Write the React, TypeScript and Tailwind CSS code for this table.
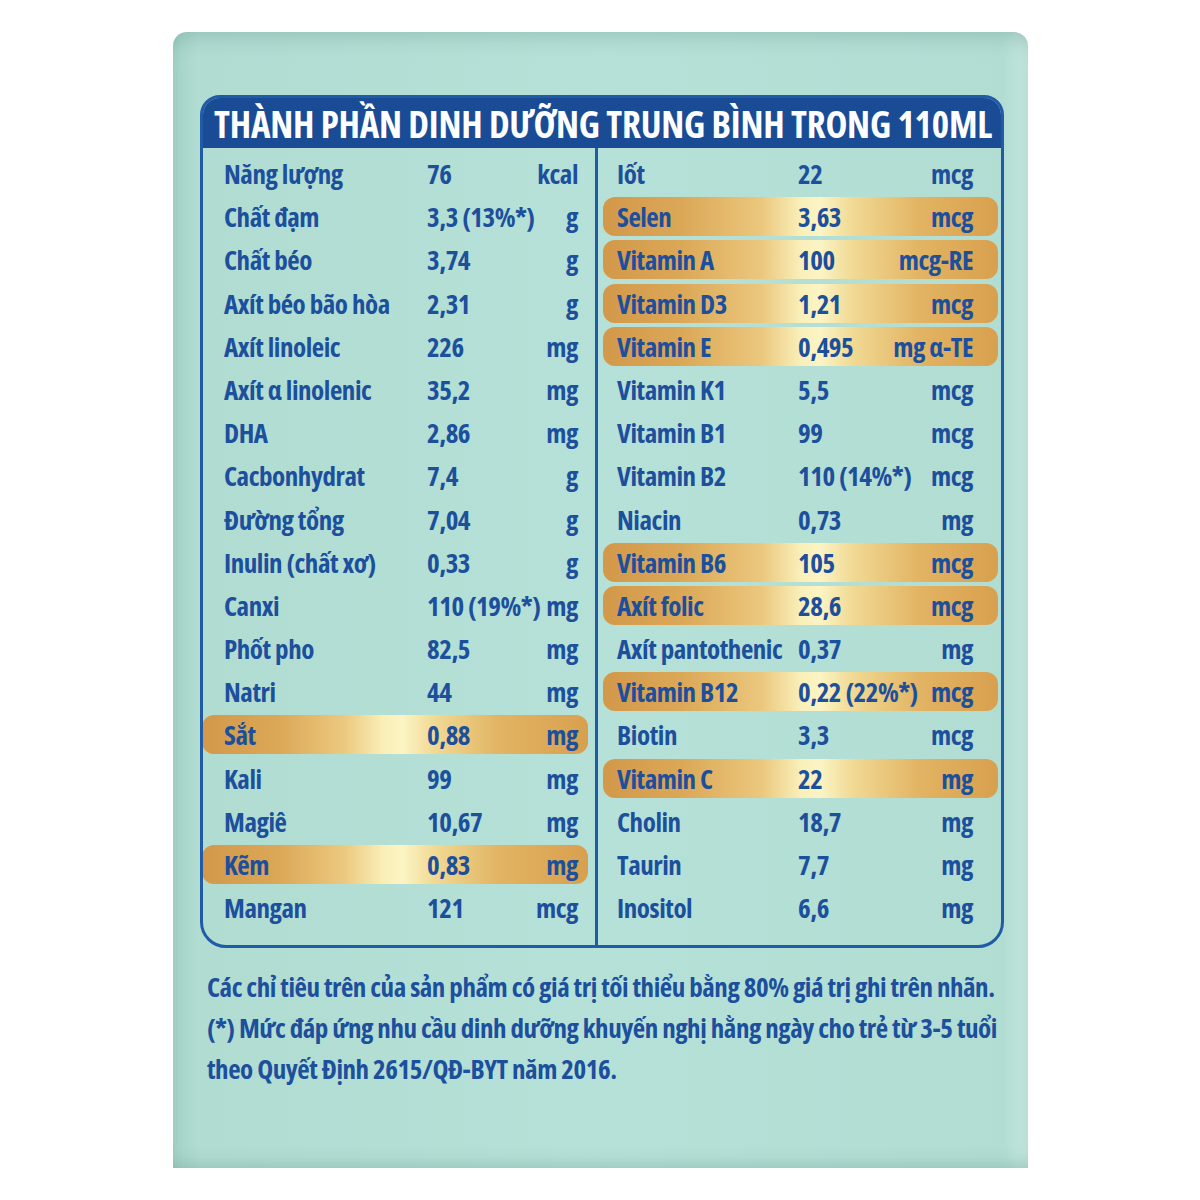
import React from 'react'

type Row = { name: string; value: string; unit: string; gold?: boolean }

const LEFT: Row[] = [
  { name: 'Năng lượng', value: '76', unit: 'kcal' },
  { name: 'Chất đạm', value: '3,3 (13%*)', unit: 'g' },
  { name: 'Chất béo', value: '3,74', unit: 'g' },
  { name: 'Axít béo bão hòa', value: '2,31', unit: 'g' },
  { name: 'Axít linoleic', value: '226', unit: 'mg' },
  { name: 'Axít α linolenic', value: '35,2', unit: 'mg' },
  { name: 'DHA', value: '2,86', unit: 'mg' },
  { name: 'Cacbonhydrat', value: '7,4', unit: 'g' },
  { name: 'Đường tổng', value: '7,04', unit: 'g' },
  { name: 'Inulin (chất xơ)', value: '0,33', unit: 'g' },
  { name: 'Canxi', value: '110 (19%*)', unit: 'mg' },
  { name: 'Phốt pho', value: '82,5', unit: 'mg' },
  { name: 'Natri', value: '44', unit: 'mg' },
  { name: 'Sắt', value: '0,88', unit: 'mg', gold: true },
  { name: 'Kali', value: '99', unit: 'mg' },
  { name: 'Magiê', value: '10,67', unit: 'mg' },
  { name: 'Kẽm', value: '0,83', unit: 'mg', gold: true },
  { name: 'Mangan', value: '121', unit: 'mcg' },
]

const RIGHT: Row[] = [
  { name: 'Iốt', value: '22', unit: 'mcg' },
  { name: 'Selen', value: '3,63', unit: 'mcg', gold: true },
  { name: 'Vitamin A', value: '100', unit: 'mcg-RE', gold: true },
  { name: 'Vitamin D3', value: '1,21', unit: 'mcg', gold: true },
  { name: 'Vitamin E', value: '0,495', unit: 'mg α-TE', gold: true },
  { name: 'Vitamin K1', value: '5,5', unit: 'mcg' },
  { name: 'Vitamin B1', value: '99', unit: 'mcg' },
  { name: 'Vitamin B2', value: '110 (14%*)', unit: 'mcg' },
  { name: 'Niacin', value: '0,73', unit: 'mg' },
  { name: 'Vitamin B6', value: '105', unit: 'mcg', gold: true },
  { name: 'Axít folic', value: '28,6', unit: 'mcg', gold: true },
  { name: 'Axít pantothenic', value: '0,37', unit: 'mg' },
  { name: 'Vitamin B12', value: '0,22 (22%*)', unit: 'mcg', gold: true },
  { name: 'Biotin', value: '3,3', unit: 'mcg' },
  { name: 'Vitamin C', value: '22', unit: 'mg', gold: true },
  { name: 'Cholin', value: '18,7', unit: 'mg' },
  { name: 'Taurin', value: '7,7', unit: 'mg' },
  { name: 'Inositol', value: '6,6', unit: 'mg' },
]

const GOLD_L = 'bg-[linear-gradient(to_right,#d3984a_0%,#dba857_20%,#ecc97f_37%,#f9efb8_47%,#fbf4c4_52%,#f1da95_60%,#e2b463_77%,#d8a04e_100%)]'
const GOLD_R = 'bg-[linear-gradient(to_right,#d3984a_0%,#dba857_20%,#ebc77d_40%,#f9efb8_50%,#fbf4c4_55%,#f1da95_63%,#e2b463_80%,#d8a04e_100%)]'

function LeftRow({ r }: { r: Row }) {
  return (
    <div
      className={`ml-[-1px] mr-[7px] grid h-[39px] grid-cols-[203px_1fr_auto] items-center rounded-[12px] pl-[22px] pr-[10px] ${r.gold ? GOLD_L : ''}`}>
      <span className="whitespace-nowrap">{r.name}</span>
      <span className="whitespace-nowrap">{r.value}</span>
      <span className="whitespace-nowrap text-right">{r.unit}</span>
    </div>
  )
}

function RightRow({ r }: { r: Row }) {
  return (
    <div
      className={`ml-[5px] mr-[3px] grid h-[39px] grid-cols-[181px_1fr_auto] items-center rounded-[12px] pl-[14px] pr-[25px] ${r.gold ? GOLD_R : ''}`}>
      <span className="whitespace-nowrap">{r.name}</span>
      <span className="whitespace-nowrap">{r.value}</span>
      <span className="whitespace-nowrap text-right">{r.unit}</span>
    </div>
  )
}

export default function App() {
  return (
    <div className="min-h-[1200px] w-[1200px] bg-white pt-[32px] font-['Open_Sans',sans-serif] [font-stretch:75%]">
      <div className="ml-[173px] h-[1136px] w-[855px] rounded-t-[14px] bg-[linear-gradient(to_right,#a4d3c8_0%,#b1dcd2_3%,#b6e1d8_50%,#b2ddd3_97%,#c3e6de_100%)] pt-[63px] pl-[27px] shadow-[inset_0_16px_20px_-12px_rgba(70,120,110,0.28),inset_0_-14px_18px_-12px_rgba(70,120,110,0.3)]">
        <div className="w-[804px] overflow-hidden rounded-t-[20px] rounded-b-[26px] border-[3px] border-[#1f5ba7]">
          <div className="flex h-[50px] items-center whitespace-nowrap bg-[#1a4c96] pl-[11px] text-[37px] font-bold leading-none tracking-[-0.2px] text-white">
            THÀNH PHẦN DINH DƯỠNG TRUNG BÌNH TRONG 110ML
          </div>
          <div className="grid grid-cols-[392px_1fr] text-[27px] font-bold leading-none tracking-[-0.45px] text-[#1c4f9c]">
            <div className="flex flex-col gap-[4.2px] pt-[6px] pb-[18px]">
              {LEFT.map(r => <LeftRow key={r.name} r={r} />)}
            </div>
            <div className="flex flex-col gap-[4.2px] border-l-[3px] border-[#1f5ba7] pt-[6px] pb-[18px]">
              {RIGHT.map(r => <RightRow key={r.name} r={r} />)}
            </div>
          </div>
        </div>
        <div className="mt-[18px] whitespace-nowrap pl-[7px] text-[27px] font-bold leading-[41px] tracking-[-0.45px] text-[#1c4f9c]">
          <p>Các chỉ tiêu trên của sản phẩm có giá trị tối thiểu bằng 80% giá trị ghi trên nhãn.</p>
          <p>(*) Mức đáp ứng nhu cầu dinh dưỡng khuyến nghị hằng ngày cho trẻ từ 3-5 tuổi</p>
          <p>theo Quyết Định 2615/QĐ-BYT năm 2016.</p>
        </div>
      </div>
    </div>
  )
}
